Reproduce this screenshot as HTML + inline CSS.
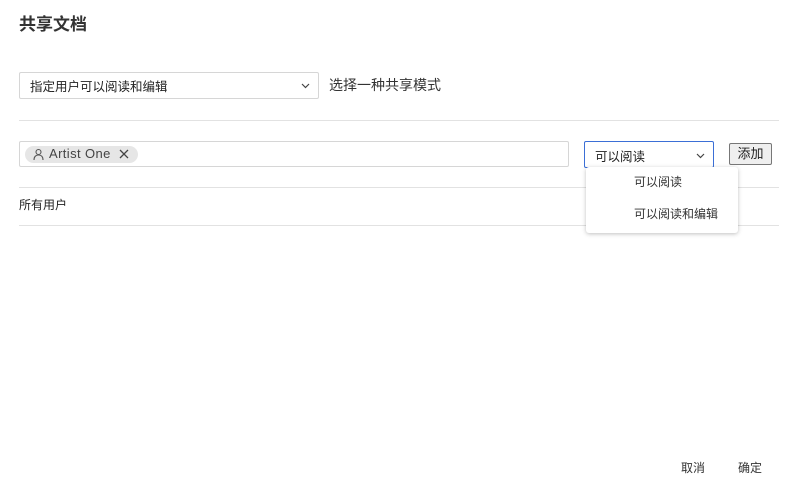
<!DOCTYPE html>
<html><head><meta charset="utf-8"><style>
*{box-sizing:border-box;margin:0;padding:0}
body{width:798px;height:498px;background:#fff;position:relative;font-family:"Liberation Sans","Noto Sans CJK SC",sans-serif;color:#222;font-size:12px;overflow:hidden}
.a{position:absolute}
.line{position:absolute;left:19px;width:760px;height:1px;background:#e2e2e2}
</style></head><body>
<div class="a" style="left:19px;top:10px;font-size:17px;font-weight:bold;color:#333">共享文档</div>
<div class="a" style="left:19px;top:72px;width:300px;height:27px;border:1px solid #d6d6d6;border-radius:2px"></div>
<div class="a" style="left:30px;top:76px;font-size:12.5px">指定用户可以阅读和编辑</div>
<svg class="a" style="left:301px;top:82px" width="9" height="7"><path d="M1 2l3.5 3.5L8 2" stroke="#444" fill="none" stroke-width="1.2"/></svg>
<div class="a" style="left:329px;top:75px;font-size:14px;color:#333">选择一种共享模式</div>
<div class="line" style="top:120px"></div>
<div class="a" style="left:19px;top:141px;width:550px;height:26px;border:1px solid #d6d6d6;border-radius:2px"></div>
<div class="a" style="left:25px;top:146px;width:113px;height:17px;background:#e6e6e6;border-radius:9px"></div>
<svg class="a" style="left:33px;top:148px" width="11" height="13"><circle cx="5.5" cy="4" r="2.5" stroke="#555" fill="none" stroke-width="1.1"/><path d="M1 12c0-3.5 2-5 4.5-5s4.5 1.5 4.5 5" stroke="#555" fill="none" stroke-width="1.1"/></svg>
<div class="a" style="left:49px;top:146px;font-size:13px;color:#444;letter-spacing:0.4px">Artist One</div>
<svg class="a" style="left:119px;top:149px" width="10" height="10"><path d="M1 1l8 8M9 1l-8 8" stroke="#444" stroke-width="1.3"/></svg>
<div class="line" style="top:187px"></div>
<div class="a" style="left:19px;top:196px">所有用户</div>
<div class="line" style="top:225px"></div>
<div class="a" style="left:584px;top:141px;width:130px;height:27px;border:1px solid #3b6fd6;border-radius:2px"></div>
<div class="a" style="left:595px;top:146px;font-size:12.5px">可以阅读</div>
<svg class="a" style="left:696px;top:152px" width="9" height="7"><path d="M1 2l3.5 3.5L8 2" stroke="#444" fill="none" stroke-width="1.2"/></svg>
<div class="a" style="left:729px;top:143px;width:43px;height:22px;border:1px solid #777;border-radius:2px;background:#efefef;font-size:13px;text-align:center;line-height:20px">添加</div>
<div class="a" style="left:586px;top:167px;width:152px;height:66px;background:#fff;border-radius:3px;box-shadow:0 1px 4px rgba(0,0,0,.25)"></div>
<div class="a" style="left:634px;top:173px;color:#333">可以阅读</div>
<div class="a" style="left:634px;top:205px;color:#333">可以阅读和编辑</div>
<div class="a" style="left:681px;top:459px;color:#333">取消</div>
<div class="a" style="left:738px;top:459px;color:#333">确定</div>
</body></html>
